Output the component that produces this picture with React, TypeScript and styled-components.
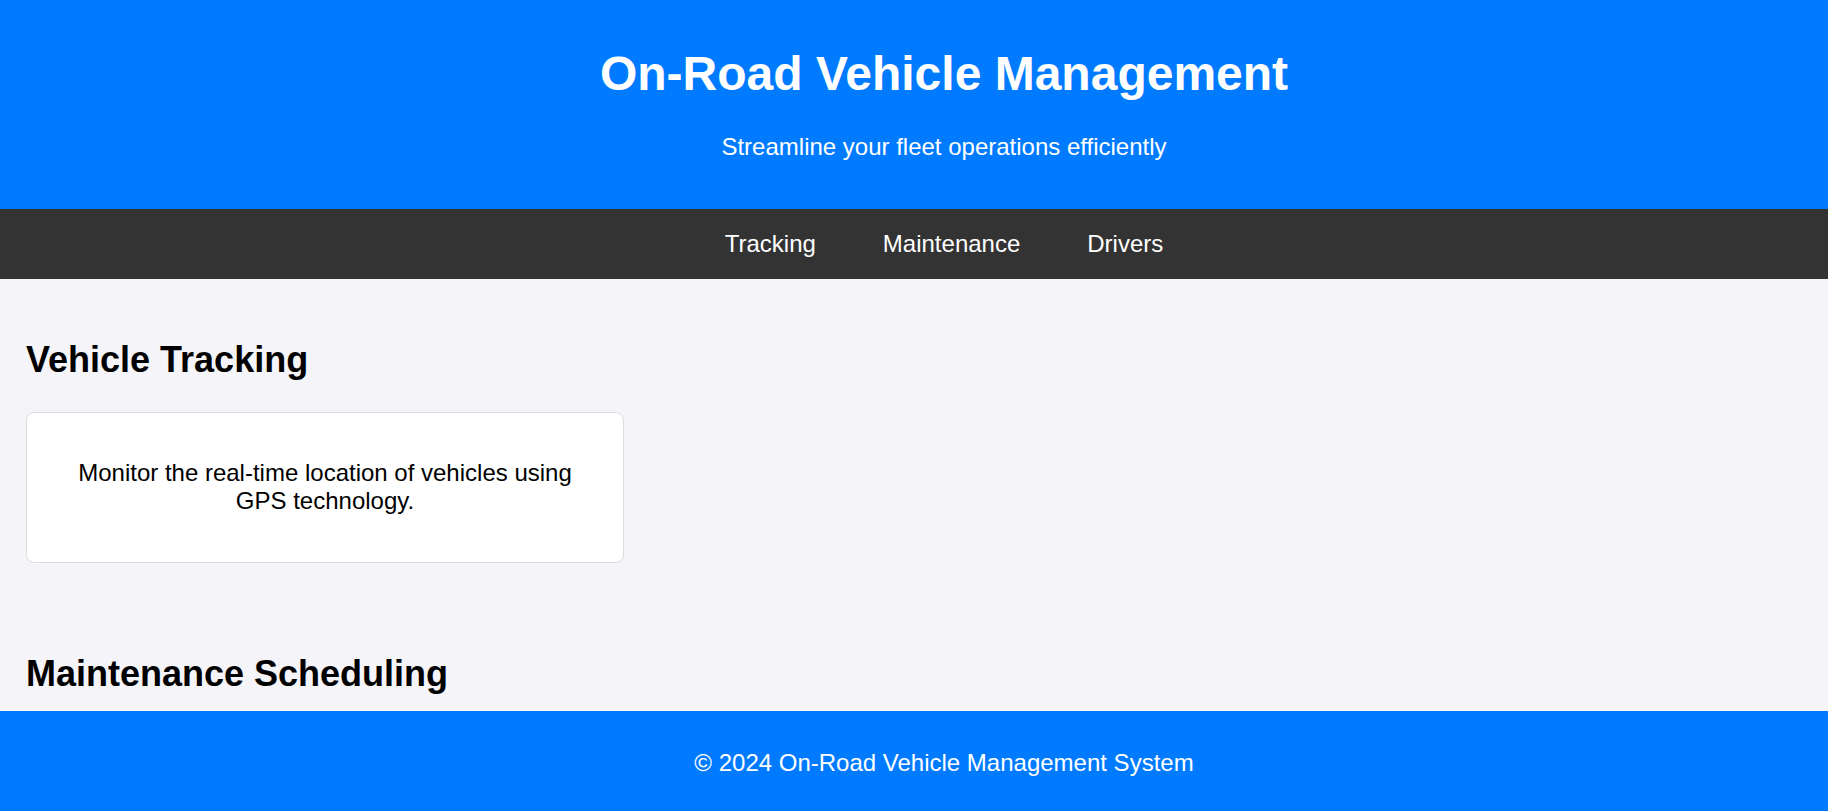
import React from 'react';
import styled, {createGlobalStyle} from 'styled-components';

const GlobalStyle = createGlobalStyle`
    html, body {
        margin: 0;
        padding: 0;
    }

    body {
        font-family: "Liberation Sans", Arial, sans-serif;
        font-size: 24px;
        background: #f4f4f9;
        color: #000;
    }
`;

// the reference centres its bars a little right of the window centre
const CENTER_SHIFT = '60px';

const Header = styled.header`
    background: #007bff;
    color: #fff;
    text-align: center;
    padding: 14px 0 24px ${CENTER_SHIFT};
`;

const Title = styled.h1`
    font-size: 48px;
    font-weight: 700;
    margin: 32px 0;
`;

const Tagline = styled.p`
    margin: 24px 0;
`;

const Nav = styled.nav`
    background: #333;
    display: flex;
    justify-content: center;
    gap: 67px;
    padding: 21px 0 21px ${CENTER_SHIFT};
`;

const NavLink = styled.a`
    color: #fff;
    text-decoration: none;
`;

const Main = styled.main`
    padding: 30px 26px 120px;
`;

const Section = styled.section`
    display: flow-root;
    margin-bottom: 60px;
`;

const SectionTitle = styled.h2`
    font-size: 36px;
    font-weight: 700;
    margin: 30px 0 31px;
`;

const Card = styled.div`
    box-sizing: border-box;
    width: 598px;
    background: #fff;
    border: 1px solid #ddd;
    border-radius: 8px;
    padding: 46px 45px 47px;
    text-align: center;

    p {
        margin: 0;
    }
`;

const Footer = styled.footer`
    position: fixed;
    left: 0;
    right: 0;
    bottom: 0;
    height: 100px;
    box-sizing: border-box;
    background: #007bff;
    color: #fff;
    text-align: center;
    padding: 38px 0 0 ${CENTER_SHIFT};
`;

const sections = [
    {
        title: 'Vehicle Tracking',
        text: 'Monitor the real-time location of vehicles using GPS technology.'
    },
    {
        title: 'Maintenance Scheduling',
        text: 'Plan and track regular maintenance to keep vehicles in top condition.'
    },
    {
        title: 'Driver Management',
        text: 'Manage driver profiles, schedules and performance records.'
    }
];

export default function App() {
    return (
        <>
            <GlobalStyle />
            <Header>
                <Title>On-Road Vehicle Management</Title>
                <Tagline>Streamline your fleet operations efficiently</Tagline>
            </Header>
            <Nav>
                <NavLink href="#tracking">Tracking</NavLink>
                <NavLink href="#maintenance">Maintenance</NavLink>
                <NavLink href="#drivers">Drivers</NavLink>
            </Nav>
            <Main>
                {sections.map(s => (
                    <Section key={s.title}>
                        <SectionTitle>{s.title}</SectionTitle>
                        <Card>
                            <p>{s.text}</p>
                        </Card>
                    </Section>
                ))}
            </Main>
            <Footer>&copy; 2024 On-Road Vehicle Management System</Footer>
        </>
    );
}
